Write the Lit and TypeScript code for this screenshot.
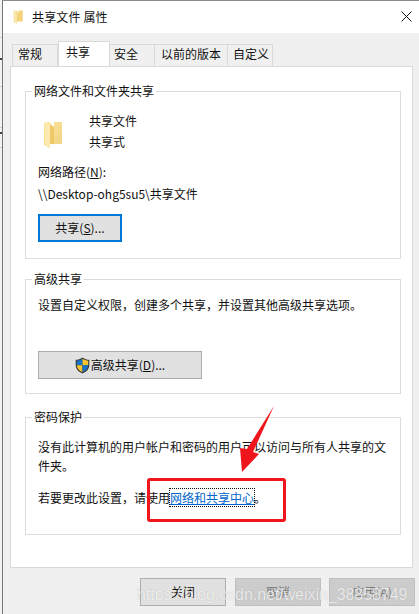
import { LitElement, html, css, svg } from "lit";
import { customElement } from "lit/decorators.js";

const folder = svg`<svg class="folder" width="19" height="28" viewBox="0 0 19 28">
  <defs><linearGradient id="f" x1="0" y1="0" x2="1" y2="1"><stop offset="0" stop-color="#fbe6a2"/><stop offset="1" stop-color="#f2d27c"/></linearGradient></defs>
  <path d="M0 2 L5 1 L10 6 L10 1 L18 1 L18 23 L6 23 L6 27 L0 24 Z" fill="url(#f)"/>
  <path d="M1 1 L6 4 L6 27 L1 24 Z" fill="#fbe9b0"/>
  <path d="M6 4 L10 6 L10 23 L6 23 Z" fill="#efc86a"/>
  <path d="M13 16 L18 16 L18 23 L13 23 Z" fill="#f3d68a"/>
</svg>`;

const shield = svg`<svg width="15" height="17" viewBox="0 0 15 17">
  <path d="M7.5 0.5 C5.5 2 3 2.8 0.7 2.8 L0.7 8 C0.7 12 3.5 15 7.5 16.5 C11.5 15 14.3 12 14.3 8 L14.3 2.8 C12 2.8 9.5 2 7.5 0.5 Z" fill="#3a3a34"/>
  <path d="M7.5 1.8 C5.8 3 3.7 3.6 1.8 3.7 L1.8 8.3 L7.5 8.3 Z" fill="#1673c9"/>
  <path d="M7.5 1.8 C9.2 3 11.3 3.6 13.2 3.7 L13.2 8.3 L7.5 8.3 Z" fill="#f7c531"/>
  <path d="M1.8 8.3 L7.5 8.3 L7.5 15.2 C4.2 13.9 2 11.5 1.8 8.3 Z" fill="#f7c531"/>
  <path d="M13.2 8.3 L7.5 8.3 L7.5 15.2 C10.8 13.9 13 11.5 13.2 8.3 Z" fill="#1673c9"/>
</svg>`;

@customElement("app-root")
export class AppRoot extends LitElement {
  static styles = css`
    :host {
      display: block;
      position: relative;
      width: 419px;
      height: 614px;
      overflow: hidden;
      font-family: "Noto Sans CJK SC", "Liberation Sans", sans-serif;
      font-size: 12px;
      line-height: 16px;
      color: #111;
      background:
        linear-gradient(#cfcfcf, #cfcfcf) 0 37px / 2px 1px no-repeat,
        linear-gradient(#444, #444) 0 58px / 2px 2px no-repeat,
        linear-gradient(#cfcfcf, #cfcfcf) 0 86px / 2px 1px no-repeat,
        linear-gradient(#cfcfcf, #cfcfcf) 0 127px / 2px 1px no-repeat,
        linear-gradient(#444, #444) 0 132px / 2px 2px no-repeat,
        linear-gradient(#cfcfcf, #cfcfcf) 0 147px / 2px 1px no-repeat,
        #f2f2f2;
    }
    .window {
      margin-left: 2px;
      height: 613px;
      border-left: 1px solid #777;
      border-top: 1px solid #8a8a8a;
      background: #f0f0f0;
      display: flex;
      flex-direction: column;
    }
    .title {
      height: 31px;
      flex: none;
      background: #fff;
      display: flex;
      align-items: center;
      padding: 0 7px 1px 10px;
      gap: 8px;
    }
    .title .t { flex: 1; font-size: 12px; letter-spacing: 0.15px; }
    .tfolder { width: 11px; height: 14px; }
    .body {
      flex: 1;
      display: flex;
      flex-direction: column;
      padding: 10px 4px 0 7px;
    }
    .tabs {
      display: flex;
      height: 23px;
      margin-left: 2px;
      position: relative;
      z-index: 1;
    }
    .tab {
      height: 22px;
      margin-top: 1px;
      flex: none;
      box-sizing: border-box;
      border: 1px solid #d9d9d9;
      border-left: none;
      border-bottom: none;
      padding: 1px 0 0 5px;
      background: #f0f0f0;
      white-space: nowrap;
    }
    .tab.first { border-left: 1px solid #d9d9d9; padding-left: 5px; width: 46px; }
    .tab.active {
      background: #fff;
      height: 25px;
      margin-top: -2px;
      width: 52px;
      border-left: 1px solid #d9d9d9;
      padding: 2px 0 0 7px;
    }
    .tab.safe { width: 45px; padding-left: 4px; }
    .tab.prev { width: 73px; padding-left: 6px; }
    .tab.custom { width: 45px; padding-left: 5px; }
    .panel {
      width: 403px;
      height: 502px;
      box-sizing: border-box;
      border: 1px solid #d9d9d9;
      background: #fff;
      padding: 24px 11px 0 14px;
      display: flex;
      flex-direction: column;
    }
    .group {
      position: relative;
      width: 376px;
      box-sizing: border-box;
      border: 1px solid #dcdcdc;
      padding-left: 12px;
    }
    .legend {
      position: absolute;
      top: -9px;
      left: 6px;
      padding: 0 2px;
      background: #fff;
    }
    .g1 { height: 168px; margin-bottom: 20px; }
    .g2 { height: 115px; margin-bottom: 23px; }
    .g3 { height: 118px; }
    .info { display: flex; margin-top: 29px; margin-left: 6px; }
    .names { margin-left: 26px; display: flex; flex-direction: column; gap: 5px; margin-top: -8px; }
    .path { margin-top: 14px; display: flex; flex-direction: column; gap: 6px; }
    u { text-underline-offset: 1px; }
    .btn {
      box-sizing: border-box;
      border: 1px solid #adadad;
      background: #e1e1e1;
      display: flex;
      align-items: center;
      justify-content: center;
      height: 28px;
    }
    .share { width: 84px; margin-top: 12px; border: 2px solid #0078d7; }
    .g2 p { margin: 17px 0 0; }
    .adv { width: 164px; margin-top: 38px; gap: 1px; }
    .g3 p { margin: 0; }
    .g3 .p1 { margin-top: 19px; line-height: 19px; width: 358px; }
    .g3 .p2 { margin-top: 15px; }
    .link {
      color: #0066cc;
      outline: 1px dotted #111;
      text-decoration: underline;
      text-underline-offset: 1px;
    }
    .footer {
      display: flex;
      justify-content: flex-end;
      gap: 8px;
      padding-top: 10px;
    }
    .footer .btn { width: 86px; height: 28px; }
    .footer .main { margin-right: 1px; }
    .footer .dis { background: #cccccc; border-color: #bfbfbf; color: #7a7a7a; }
    .overlay { position: absolute; inset: 0; pointer-events: none; }
    .redbox {
      position: absolute;
      left: 147px;
      top: 478px;
      width: 139px;
      height: 44px;
      box-sizing: border-box;
      border: 3px solid #f0141c;
      border-radius: 3px;
    }
    .arrow { position: absolute; left: 238px; top: 404px; }
    .mark {
      position: absolute;
      left: 137px;
      top: 585px;
      font-family: "Liberation Sans", sans-serif;
      font-size: 15.9px;
      line-height: 20px;
      color: rgba(255, 255, 255, 0.75);
      white-space: nowrap;
      text-shadow: 0 0 1px rgba(110, 110, 110, 0.4);
    }
  `;

  render() {
    return html`
      <div class="window">
        <div class="title">
          <svg class="tfolder" viewBox="0 0 19 28">
            <path d="M0 2 L5 1 L10 6 L10 1 L18 1 L18 23 L6 23 L6 27 L0 24 Z" fill="#f3d27a"/>
            <path d="M1 1 L6 4 L6 27 L1 24 Z" fill="#fbe9b0"/>
          </svg>
          <span class="t">共享文件 属性</span>
          <svg width="11" height="11" viewBox="0 0 11 11"><path d="M0.5 0.5 L10.5 10.5 M10.5 0.5 L0.5 10.5" stroke="#111" stroke-width="1" fill="none"/></svg>
        </div>
        <div class="body">
          <div class="tabs">
            <div class="tab first">常规</div>
            <div class="tab active">共享</div>
            <div class="tab safe">安全</div>
            <div class="tab prev">以前的版本</div>
            <div class="tab custom">自定义</div>
          </div>
          <div class="panel">
            <div class="group g1">
              <div class="legend">网络文件和文件夹共享</div>
              <div class="info">
                ${folder}
                <div class="names"><span>共享文件</span><span>共享式</span></div>
              </div>
              <div class="path">
                <span>网络路径(<u>N</u>):</span>
                <span>\\\\Desktop-ohg5su5\\共享文件</span>
              </div>
              <div class="btn share"><span>共享(<u>S</u>)...</span></div>
            </div>
            <div class="group g2">
              <div class="legend">高级共享</div>
              <p>设置自定义权限，创建多个共享，并设置其他高级共享选项。</p>
              <div class="btn adv">${shield}<span>高级共享(<u>D</u>)...</span></div>
            </div>
            <div class="group g3">
              <div class="legend">密码保护</div>
              <p class="p1">没有此计算机的用户帐户和密码的用户可以访问与所有人共享的文件夹。</p>
              <p class="p2">若要更改此设置，请使用<span class="link">网络和共享中心</span>。</p>
            </div>
          </div>
          <div class="footer">
            <div class="btn main">关闭</div>
            <div class="btn dis">取消</div>
            <div class="btn dis">应用(A)</div>
          </div>
        </div>
      </div>
      <div class="overlay">
        <div class="redbox"></div>
        <svg class="arrow" width="40" height="70" viewBox="0 0 40 70">
          <path d="M36 2 L15 48 L21 50 L4 68 L2 44 L9 45 Z" fill="#f0141c"/>
        </svg>
        <div class="mark">https://blog.csdn.net/weixin_38858749</div>
      </div>
    `;
  }
}
